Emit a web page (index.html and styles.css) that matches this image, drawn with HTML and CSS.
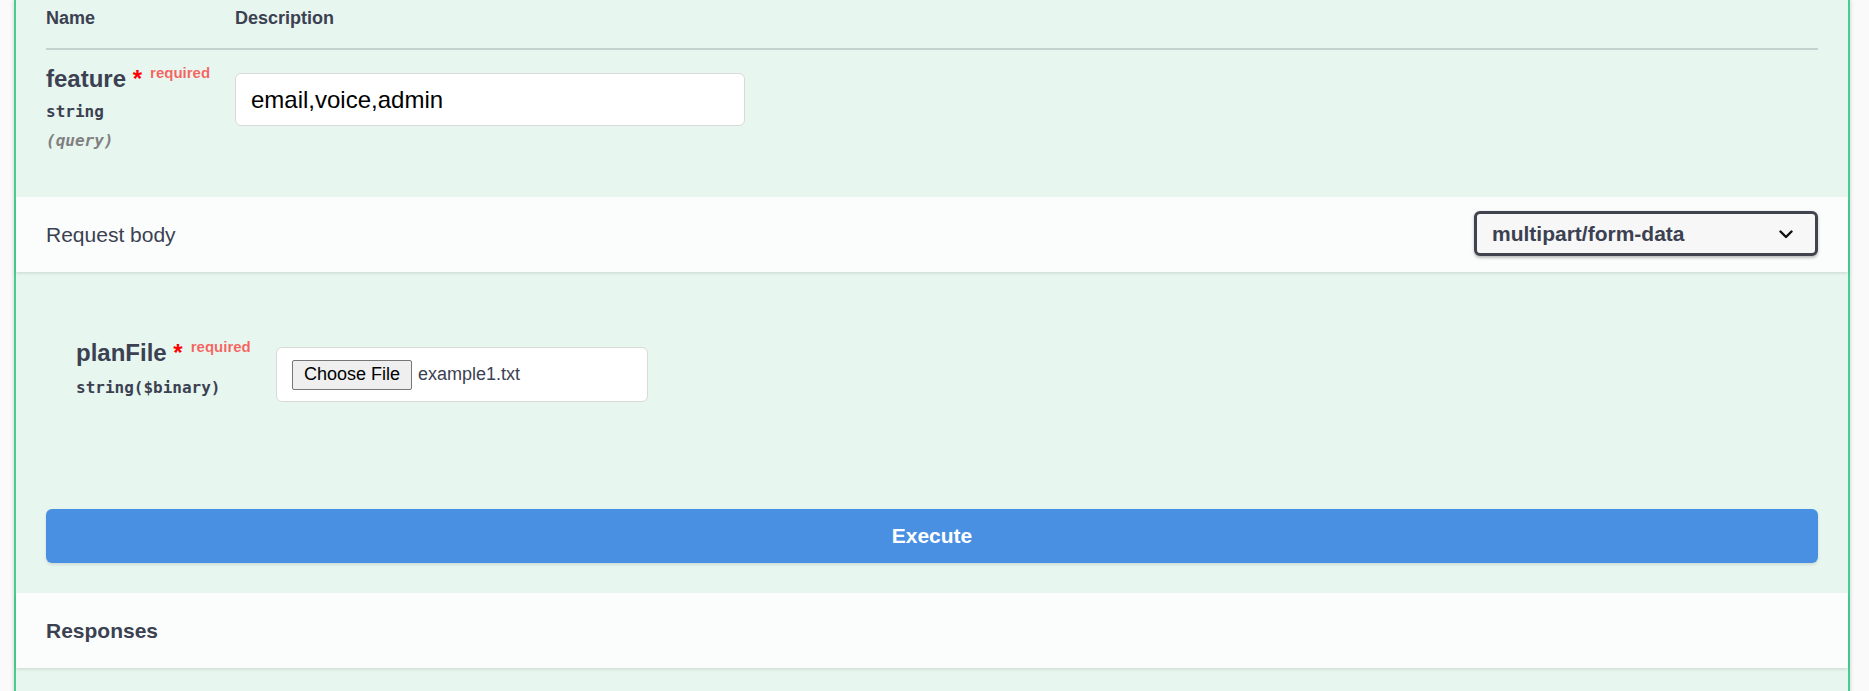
FILE: index.html
```html
<!DOCTYPE html>
<html lang="en">
<head>
<meta charset="utf-8">
<title>Swagger operation</title>
<link rel="stylesheet" href="styles.css">
</head>
<body>
<div class="page">
  <div class="opblock">
    <div class="params">
      <div class="thead">
        <div class="col-name">Name</div>
        <div class="col-desc">Description</div>
      </div>
      <div class="prow">
        <div class="col-name">
          <div class="pname">feature<span class="star">&nbsp;*</span><span class="req">required</span></div>
          <div class="ptype">string</div>
          <div class="pin">(query)</div>
        </div>
        <div class="col-desc">
          <input class="text-input" type="text" value="email,voice,admin">
        </div>
      </div>
    </div>

    <div class="section-header">
      <div class="section-title">Request body</div>
      <div class="select">
        <span class="select-text">multipart/form-data</span>
        <svg class="chevron" width="14" height="9" viewBox="0 0 14 9"><path d="M1.5 1.5 L7 7 L12.5 1.5" fill="none" stroke="#111" stroke-width="2.4" stroke-linecap="round" stroke-linejoin="round"/></svg>
      </div>
    </div>

    <div class="body-params">
      <div class="body-row">
        <div class="body-name">
          <div class="pname">planFile<span class="star">&nbsp;*</span><span class="req">required</span></div>
          <div class="ptype2">string($binary)</div>
        </div>
        <div class="file-box">
          <span class="file-btn">Choose File</span>
          <span class="file-name">example1.txt</span>
        </div>
      </div>
    </div>

    <div class="execute-wrap">
      <button class="execute" type="button">Execute</button>
    </div>

    <div class="section-header">
      <div class="section-title bold">Responses</div>
    </div>
    <div class="tail"></div>
  </div>
</div>
</body>
</html>
```

FILE: styles.css
```css
html, body {
  margin: 0;
  padding: 0;
}

body {
  background: #fafafa;
  font-family: "Liberation Sans", Arial, sans-serif;
  color: #3b4151;
  overflow: hidden;
}

.page {
  padding: 0 19px 0 14px;
  height: 691px;
}

.opblock {
  background: #e7f6ef;
  border-left: 2px solid #49cc90;
  border-right: 2px solid #49cc90;
  box-shadow: 0 0 4px rgba(0, 0, 0, 0.19);
  min-height: 691px;
}

/* parameters table */
.params {
  padding: 0 30px 46px;
}

.thead {
  display: flex;
  padding: 8px 0 19px;
  border-bottom: 2px solid rgba(59, 65, 81, 0.2);
  font-size: 18px;
  line-height: 21px;
  font-weight: 700;
}

.col-name {
  width: 189px;
  flex: none;
}

.col-desc {
  flex: 1;
}

.prow {
  display: flex;
  padding-top: 15px;
}

.pname {
  font-size: 24px;
  line-height: 28px;
  font-weight: 700;
  white-space: nowrap;
}

.star {
  color: #ff0000;
}

.req {
  font-size: 15px;
  font-weight: 700;
  color: rgba(255, 0, 0, 0.6);
  padding-left: 8px;
  position: relative;
  top: -9px;
}

.ptype {
  font-family: "DejaVu Sans Mono", "Liberation Mono", monospace;
  font-size: 16px;
  font-weight: 700;
  line-height: 24px;
  padding: 4px 0 7px;
}

.pin {
  font-family: "DejaVu Sans Mono", "Liberation Mono", monospace;
  font-size: 16px;
  font-weight: 700;
  font-style: italic;
  line-height: 20px;
  color: #808080;
}

.text-input {
  display: block;
  box-sizing: border-box;
  width: 510px;
  height: 53px;
  margin: 8px 0 0;
  padding: 0 15px;
  border: 1px solid #d9d9d9;
  border-radius: 6px;
  background: #fff;
  font-family: "Liberation Sans", Arial, sans-serif;
  font-size: 24px;
  color: #000;
  outline: none;
}

/* section headers */
.section-header {
  display: flex;
  align-items: center;
  justify-content: space-between;
  height: 75px;
  padding: 0 30px;
  background: rgba(255, 255, 255, 0.8);
  box-shadow: 0 1.5px 3px rgba(0, 0, 0, 0.1);
  position: relative;
}

.section-title {
  font-size: 21px;
  line-height: 24px;
}

.section-title.bold {
  font-weight: 700;
}

.select {
  display: flex;
  align-items: center;
  box-sizing: border-box;
  width: 344px;
  height: 45px;
  margin-top: -2px;
  padding: 0 22px 0 15px;
  border: 3px solid #41444e;
  border-radius: 6px;
  background: #f7f7f7;
  box-shadow: 0 1.5px 3px rgba(0, 0, 0, 0.25);
  font-size: 21px;
  font-weight: 700;
}

.select-text {
  flex: 1;
}

.chevron {
  display: block;
  margin-top: 1px;
}

/* request body */
.body-params {
  padding: 67px 60px 0;
}

.body-row {
  display: flex;
  align-items: flex-start;
}

.body-name {
  width: 200px;
  flex: none;
}

.ptype2 {
  font-family: "DejaVu Sans Mono", "Liberation Mono", monospace;
  font-size: 16px;
  font-weight: 700;
  line-height: 24px;
  padding-top: 6px;
}

.file-box {
  display: flex;
  align-items: center;
  box-sizing: border-box;
  width: 372px;
  height: 55px;
  margin-top: 8px;
  padding: 0 15px;
  border: 1px solid #d9d9d9;
  border-radius: 6px;
  background: #fff;
}

.file-btn {
  box-sizing: border-box;
  width: 120px;
  height: 30px;
  display: flex;
  align-items: center;
  justify-content: center;
  background: #efefef;
  border: 1px solid #767676;
  border-radius: 2px;
  font-size: 18px;
  color: #000;
}

.file-name {
  margin-left: 6px;
  font-size: 18px;
  color: #3b4151;
}

.execute-wrap {
  padding: 107px 30px 30px;
}

.execute {
  display: block;
  width: 100%;
  height: 54px;
  border: none;
  border-radius: 6px;
  background: #4990e2;
  box-shadow: 0 1.5px 3px rgba(0, 0, 0, 0.1);
  color: #fff;
  font-family: "Liberation Sans", Arial, sans-serif;
  font-size: 21px;
  font-weight: 700;
  padding: 0;
}

.tail {
  height: 30px;
}
```
